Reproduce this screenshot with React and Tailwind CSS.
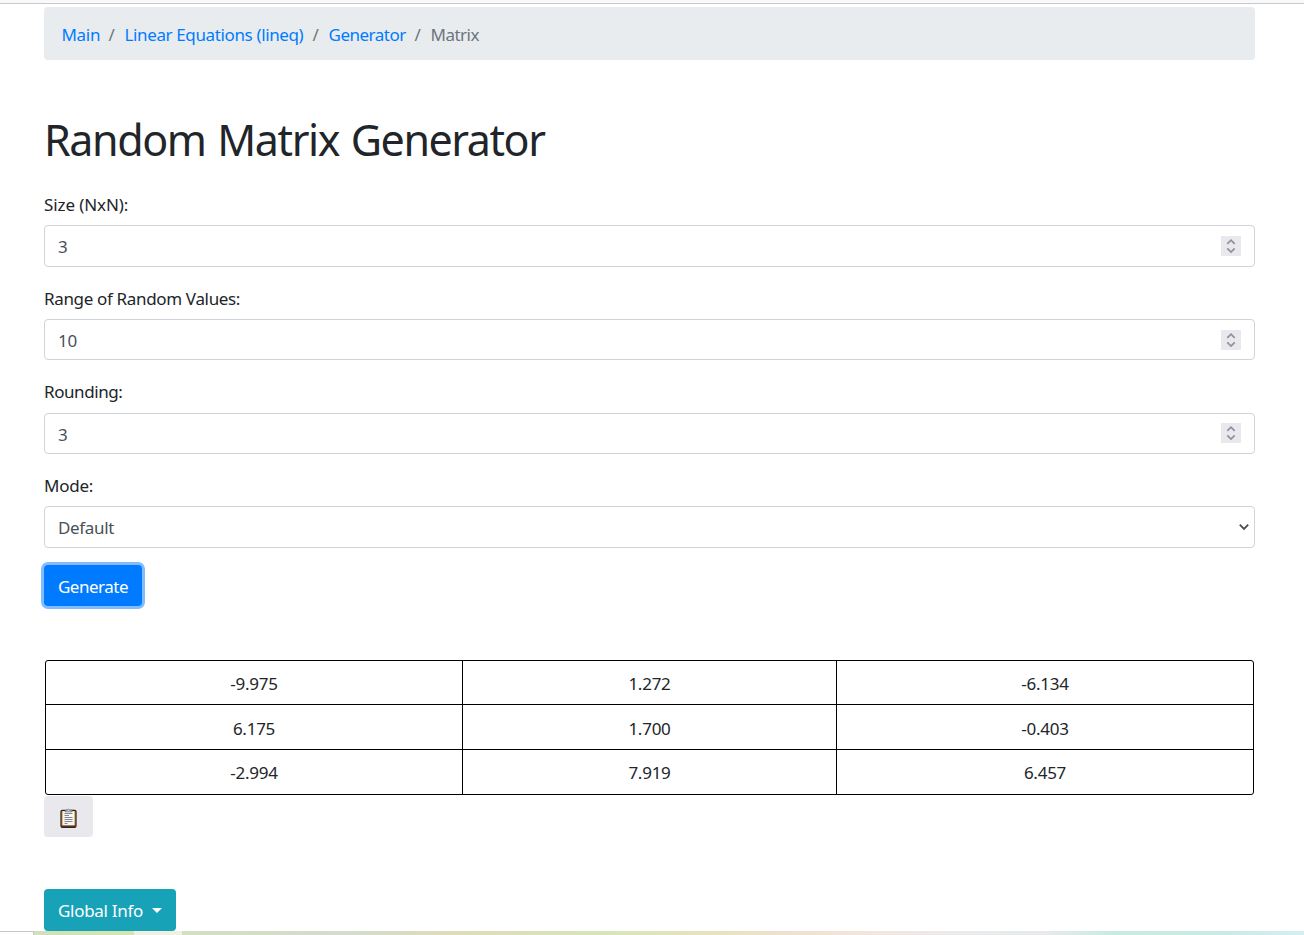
const CRUMBS = [
  { label: "Main", style: "w-[38px] tracking-[-0.3px]" },
  { label: "Linear Equations (lineq)", style: "w-[179px] tracking-[-0.37px]" },
  { label: "Generator", style: "w-[77px] tracking-[-0.5px]" },
];

const ROWS = [
  ["-9.975", "1.272", "-6.134"],
  ["6.175", "1.700", "-0.403"],
  ["-2.994", "7.919", "6.457"],
];

function Spinner({ className = "" }) {
  return (
    <svg className={`h-5 w-5 bg-[#e9e9ed] ${className}`} viewBox="0 0 20 20" fill="none" stroke="#8f8f9d" strokeWidth="1.7">
      <path d="M6.3 7.8 10 4.2l3.7 3.6M6.3 12.4 10 16l3.7-3.6" />
    </svg>
  );
}

function NumberField({ label, value, box, labelClass, spinnerClass }) {
  return (
    <div className="flex flex-col">
      <label className={`leading-[26px] whitespace-nowrap ${labelClass}`}>{label}</label>
      <div className={`flex items-center justify-between rounded-[4px] border border-[#ced4da] bg-white pl-[13px] pr-[13px] text-[#495057] ${box}`}>
        <span className="pt-0.5 tracking-[-0.2px]">{value}</span>
        <Spinner className={spinnerClass} />
      </div>
    </div>
  );
}

function Clipboard() {
  return (
    <svg className="h-[20px] w-[17px]" viewBox="0 0 17 20">
      <rect x="1" y="2.3" width="15" height="17" rx="1.2" fill="#d98a3c" stroke="#27231f" strokeWidth="1.2" />
      <path d="M1 18.4h15" stroke="#4a3425" strokeWidth="1.8" />
      <rect x="2.6" y="3.2" width="11.8" height="14" fill="#f5f5f5" />
      <path d="M5 3.8V2.2h2.2Q8.5-.2 9.8 2.2H12v1.6z" fill="#cdd3d6" stroke="#55585a" strokeWidth="0.6" />
      <path d="M4.5 5.5h8M4.5 7.5h4.5M4.5 9.5h8M4.5 11.5h8M4.5 13.5h8M4.5 15.5h3" stroke="#85898b" strokeWidth="1" />
    </svg>
  );
}

export default function App() {
  return (
    <div className="flex h-[935px] w-[1304px] flex-col overflow-hidden bg-white font-['Noto_Sans',sans-serif] text-[17px] text-[#212529]">
      <div className="h-1 shrink-0 border-b border-[#c9c9cc] bg-[#f9f9fb]" />
      <main className="ml-11 mt-[3px] flex w-[1211px] shrink-0 flex-col">
        <nav className="flex h-[53px] items-center rounded-[4px] bg-[#e9ecef] pl-[17.5px] pt-[2px] text-[#6c757d]">
          <div className="flex h-[26px] items-center whitespace-nowrap">
            {CRUMBS.map((c) => (
              <div key={c.label} className="flex">
                <a className={`text-[#007bff] ${c.style}`}>{c.label}</a>
                <span className="w-[25px] pl-[9px]">/</span>
              </div>
            ))}
            <span className="tracking-[-0.5px]">Matrix</span>
          </div>
        </nav>

        <h1 className="mt-[53px] h-[79px] whitespace-nowrap text-[43px] leading-[53px] tracking-[-1.43px] [word-spacing:2px]">Random Matrix Generator</h1>

        <NumberField label="Size (NxN):" value="3" box="h-[42px]" labelClass="h-[33px] tracking-[-0.1px]" />
        <div className="h-[19px]" />
        <NumberField label="Range of Random Values:" value="10" box="h-[41px]" labelClass="h-[33px] tracking-[-0.34px]" />
        <div className="h-[19px]" />
        <NumberField label="Rounding:" value="3" box="h-[41px]" labelClass="h-[34px] tracking-[-0.42px]" spinnerClass="mb-[2px]" />
        <div className="flex flex-col pt-[19px]">
          <label className="h-[33px] leading-[26px] tracking-[-0.25px]">Mode:</label>
          <div className="flex h-[42px] items-center justify-between rounded-[4px] border border-[#ced4da] pl-[13px] pr-[5px] text-[#495057]">
            <span className="pt-0.5 tracking-[-0.35px]">Default</span>
            <svg className="h-[10px] w-[10px]" viewBox="0 0 10 10" fill="none" stroke="#495057" strokeWidth="1.9">
              <path d="m.8 2.6 4.2 4.2 4.2-4.2" />
            </svg>
          </div>
        </div>

        <button className="mt-[17px] h-[41px] w-[98px] rounded-[4px] bg-[#007bff] pt-[3px] text-white tracking-[-0.48px] ring-3 ring-[#80bdff]">
          Generate
        </button>

        <div className="ml-px mt-[54px] grid h-[135px] w-[1209px] grid-cols-[417px_374px_1fr] grid-rows-[44px_45px_1fr] overflow-hidden rounded-[3px] border border-black">
          {ROWS.map((row, r) =>
            row.map((v, c) => (
              <div
                key={v}
                className={`flex items-center justify-center border-black tracking-[-0.25px] ${r < 2 ? "border-b pt-[3px]" : "pt-px"} ${c < 2 ? "border-r" : ""}`}
              >
                {v}
              </div>
            ))
          )}
        </div>

        <button className="mt-px flex h-[41px] w-[49px] items-center justify-center rounded-[4px] bg-[#e9e9ed] pt-[3px]">
          <Clipboard />
        </button>

        <button className="mt-[52px] flex h-[42px] w-[132px] items-center rounded-[4px] bg-[#17a2b8] pl-[14px] pt-px text-white">
          <span className="w-[94px] text-left whitespace-nowrap tracking-[-0.3px]">Global Info</span>
          <svg className="h-[5px] w-[10px]" viewBox="0 0 10 5">
            <path d="M0 0h10L5 5z" fill="#fff" />
          </svg>
        </button>
      </main>
      <footer className="flex h-1 shrink-0">
        <div className="h-1 w-[34px] border-r border-t border-[#c6c6c6] bg-white" />
        <div className="h-1 w-[100px] bg-linear-to-r from-[#cfe0bd] to-[#d5e5b2]" />
        <div className="h-1 w-12 bg-[#edf2e2]" />
        <div className="h-1 flex-1 bg-[linear-gradient(90deg,#d2dfc2_0%,#d4dccb_15%,#dedcba_24%,#d8e5b7_38%,#e8e3be_47%,#efe0cf_54%,#f5e6dc_61%,#ebebec_69%,#e7ebeb_77%,#c8ebe1_83%,#c9eae6_93%,#d6eff2_100%)]" />
      </footer>
    </div>
  );
}
